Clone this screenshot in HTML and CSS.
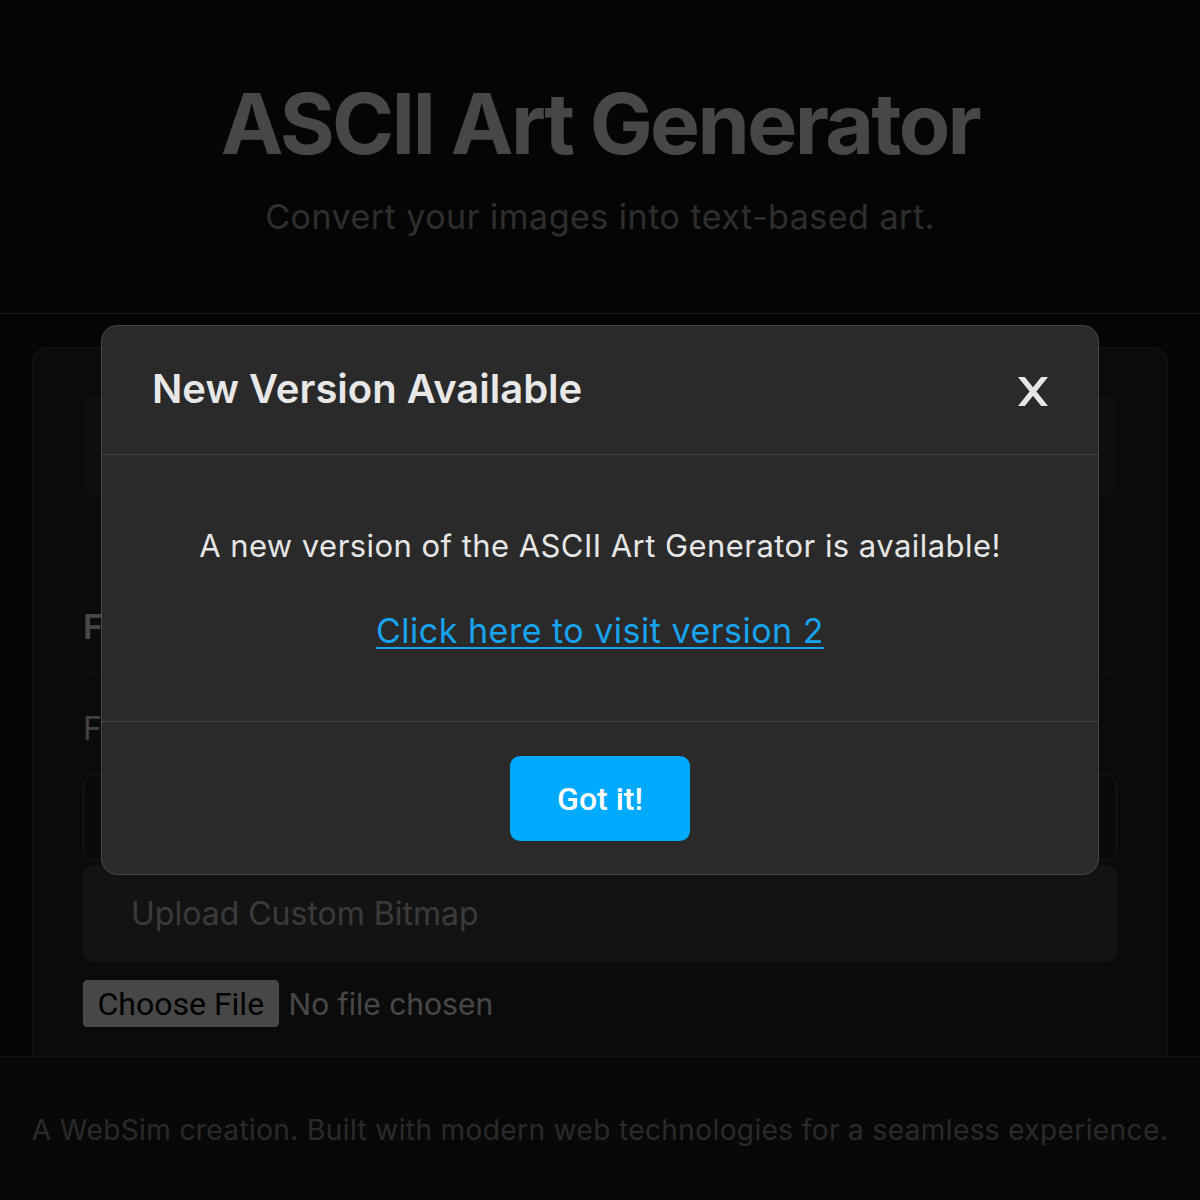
FILE: index.html
```html
<!DOCTYPE html>
<html lang="en">
<head>
<meta charset="utf-8">
<title>ASCII Art Generator</title>
<link rel="stylesheet" href="styles.css">
</head>
<body>
<div class="page">
  <header class="site-header">
    <h1 class="site-title">ASCII Art Generator</h1>
    <p class="site-subtitle">Convert your images into text-based art.</p>
  </header>
  <main class="site-main">
    <section class="card">
      <div class="tabs">
        <span class="tab">Image</span>
        <span class="tab">Text</span>
      </div>
      <h2 class="section-title">Font Settings</h2>
      <label class="field-label">Font Bitmap</label>
      <div class="select-box">Default</div>
      <div class="upload-box">Upload Custom Bitmap</div>
      <input class="file-input" type="file">
    </section>
  </main>
  <footer class="site-footer">
    <p class="footer-text">A WebSim creation. Built with modern web technologies for a seamless experience.</p>
  </footer>
</div>

<div class="overlay">
  <div class="modal">
    <div class="modal-header">
      <h3 class="modal-title">New Version Available</h3>
      <button class="modal-close" aria-label="Close">
        <svg width="30" height="29" viewBox="0 0 30 29"><path d="M0 0 H6.8 L30 29 H23.2 Z M23.2 0 H30 L6.8 29 H0 Z" fill="#e6e6e6"/></svg>
      </button>
    </div>
    <div class="modal-body">
      <p class="modal-text">A new version of the ASCII Art Generator is available!</p>
      <p class="modal-link-row"><a class="modal-link" href="#">Click here to visit version 2</a></p>
    </div>
    <div class="modal-footer">
      <button class="modal-btn">Got it!</button>
    </div>
  </div>
</div>
</body>
</html>
```
FILE: styles.css
```css
* { box-sizing: border-box; }
html, body { margin: 0; padding: 0; }
body {
  background: #121212;
  font-family: Inter, "Noto Sans", sans-serif;
  color: #eeeeee;
  overflow: hidden;
}
.page {
  height: 1200px;
  display: flex;
  flex-direction: column;
}
.site-header {
  flex: none;
  height: 314px;
  padding-top: 74px;
  text-align: center;
  border-bottom: 1px solid #555555;
}
.site-title {
  margin: 0;
  font-size: 84px;
  line-height: 1.2;
  font-weight: 700;
  letter-spacing: -2.6px;
  color: #eeeeee;
}
.site-subtitle {
  margin: 22px 0 0;
  font-size: 34px;
  line-height: 1.2;
  letter-spacing: 0.5px;
  color: #9c9c9c;
}
.site-main {
  flex: 1;
  overflow: hidden;
  padding: 33px 32px 0;
}
.card {
  background: #262626;
  border: 1px solid #474747;
  border-radius: 16px;
  padding: 48px 50px 60px;
  height: 900px;
}
.tabs {
  height: 99px;
  background: #343434;
  border-radius: 12px;
  display: flex;
}
.tab { display: none; }
.section-title {
  margin: 112px 0 0;
  font-size: 34px;
  line-height: 1.2;
  font-weight: 600;
  color: #eeeeee;
  padding-bottom: 25px;
  border-bottom: 1px solid #444444;
}
.field-label {
  display: block;
  margin-top: 36px;
  font-size: 32px;
  line-height: 1.2;
  color: #dddddd;
}
.select-box {
  margin-top: 26px;
  height: 87px;
  background: #222222;
  border: 1px solid #555555;
  border-radius: 12px;
  color: transparent;
  font-size: 30px;
  padding: 24px 48px;
}
.upload-box {
  margin-top: 4px;
  height: 97px;
  background: #404040;
  border-radius: 12px;
  padding: 0 48px;
  display: flex;
  align-items: center;
  font-size: 32px;
  color: #c4c4c4;
}
.file-input {
  display: block;
  margin-top: 18px;
  font-family: Inter, sans-serif;
  font-size: 30px;
  color: #eeeeee;
}
.file-input::file-selector-button {
  font-family: Roboto, sans-serif;
  font-size: 32px;
  color: #000000;
  background: #efefef;
  border: 1px solid #f6f6f6;
  border-radius: 4px;
  height: 47px;
  padding: 0 13.5px;
  margin-right: 10px;
}
.site-footer {
  flex: none;
  height: 144px;
  background: #1b1b1b;
  border-top: 1px solid #444444;
  padding-top: 57px;
  text-align: center;
}
.footer-text {
  margin: 0;
  font-size: 28px;
  line-height: 1.2;
  letter-spacing: 0.4px;
  color: #8e8e8e;
}

.overlay {
  position: fixed;
  inset: 0;
  background: rgba(0, 0, 0, 0.7);
  display: flex;
  align-items: center;
  justify-content: center;
}
.modal {
  width: 998px;
  background: #2a2a2a;
  border: 1.5px solid #464646;
  border-radius: 16px;
  color: #e6e6e6;
}
.modal-header {
  display: flex;
  align-items: center;
  justify-content: space-between;
  padding: 39px 50px 41px;
  border-bottom: 1.5px solid #464646;
}
.modal-title {
  margin: 0;
  font-size: 40px;
  line-height: 1.2;
  font-weight: 600;
  color: #e8e8e8;
}
.modal-close {
  background: none;
  border: 0;
  padding: 0;
  margin: 5px 0 0;
  width: 30px;
  height: 29px;
  display: flex;
  cursor: pointer;
}
.modal-body {
  padding: 72px 50px 70px;
  text-align: center;
  border-bottom: 1.5px solid #464646;
}
.modal-text {
  margin: 0;
  font-size: 31px;
  line-height: 1.2;
  letter-spacing: 0.45px;
  color: #e6e6e6;
}
.modal-link-row {
  margin: 47px 0 0;
  font-size: 34px;
  line-height: 1.2;
  letter-spacing: 0.5px;
}
.modal-link {
  color: #18a3ee;
  text-decoration: underline;
  text-underline-offset: 4px;
  text-decoration-thickness: 2px;
}
.modal-footer {
  padding: 34px 50px 33px;
  display: flex;
  justify-content: center;
}
.modal-btn {
  background: #00aaff;
  color: #ffffff;
  border: 0;
  border-radius: 10px;
  width: 180px;
  height: 85px;
  font-family: Roboto, sans-serif;
  font-size: 32px;
  font-weight: 500;
  padding: 0;
  cursor: pointer;
}
```
